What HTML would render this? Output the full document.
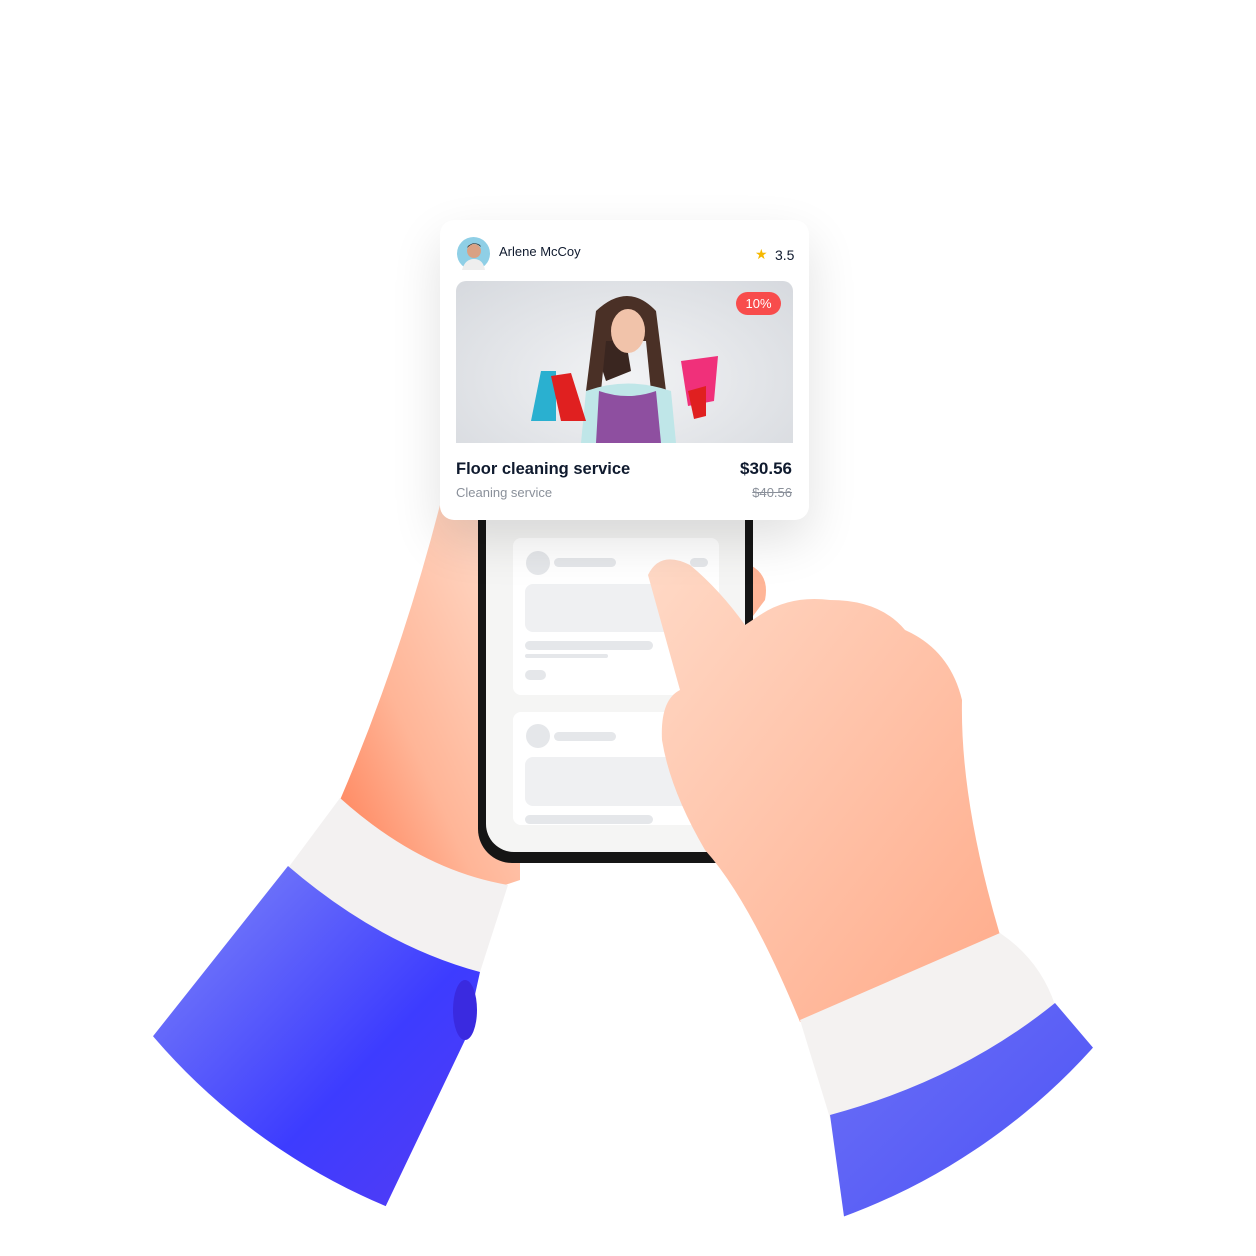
<!DOCTYPE html>
<html><head><style>
html,body{margin:0;padding:0;background:#fff;width:1256px;height:1256px;overflow:hidden;font-family:"Liberation Sans",sans-serif}
.card{position:absolute;left:440px;top:220px;width:369px;height:300px;background:#fff;border-radius:14px;box-shadow:0 20px 50px rgba(0,0,0,.12)}
.t{position:absolute;white-space:nowrap;color:#0f1a2e}
</style></head><body>
<svg width="1256" height="1256" style="position:absolute;left:0;top:0">
<defs>
<clipPath id="c"><circle cx="628" cy="630" r="625"/></clipPath>
<linearGradient id="sk" x1="0" y1="0" x2="1" y2="1"><stop offset="0" stop-color="#ffd9c6"/><stop offset="1" stop-color="#ffab8a"/></linearGradient>
<linearGradient id="skl" x1="1" y1="0" x2="0" y2="1"><stop offset="0" stop-color="#ffe0d0"/><stop offset="0.6" stop-color="#ffb597"/><stop offset="1" stop-color="#ff7a50"/></linearGradient>
<linearGradient id="bl" x1="0" y1="0" x2="1" y2="1"><stop offset="0" stop-color="#8a93f5"/><stop offset=".6" stop-color="#3d3cff"/><stop offset="1" stop-color="#5a3cf0"/></linearGradient>
<linearGradient id="br" x1="0" y1="0" x2="1" y2="1"><stop offset="0" stop-color="#6b6ff7"/><stop offset="1" stop-color="#4a50f5"/></linearGradient>
</defs>
<g clip-path="url(#c)">
<!-- left arm -->
<path d="M440 505 L520 505 L520 880 L505 885 L470 900 L340 800 Q400 660 440 505 Z" fill="url(#skl)"/>
<path d="M750 565 Q770 575 765 600 L750 620 Z" fill="#ffb597"/>
<path d="M340 798 Q420 870 508 885 L480 972 Q380 945 288 868 Z" fill="#f3f1f1"/>
<path d="M288 866 Q380 945 480 972 L465 1040 L360 1260 L100 1260 L150 1040 Z" fill="url(#bl)"/>
<ellipse cx="465" cy="1010" rx="12" ry="30" fill="#3a2ae0"/>
<!-- phone -->
<rect x="478" y="480" width="275" height="383" rx="34" fill="#151515"/>
<rect x="486" y="480" width="259" height="372" rx="28" fill="#f5f5f4"/>
<rect x="513" y="538" width="206" height="157" rx="8" fill="#fff"/>
<circle cx="538" cy="563" r="12" fill="#e5e7ea"/>
<rect x="554" y="558" width="62" height="9" rx="4.5" fill="#e5e7ea"/>
<rect x="690" y="558" width="18" height="9" rx="4.5" fill="#e5e7ea"/>
<rect x="525" y="584" width="180" height="48" rx="8" fill="#eff0f2"/>
<rect x="525" y="641" width="128" height="9" rx="4.5" fill="#e5e7ea"/>
<rect x="525" y="654" width="83" height="4" rx="2" fill="#e5e7ea"/>
<rect x="525" y="670" width="21" height="10" rx="5" fill="#e5e7ea"/>
<rect x="513" y="712" width="206" height="113" rx="8" fill="#fff"/>
<circle cx="538" cy="736" r="12" fill="#e5e7ea"/>
<rect x="554" y="732" width="62" height="9" rx="4.5" fill="#e5e7ea"/>
<rect x="525" y="757" width="180" height="49" rx="8" fill="#eff0f2"/>
<rect x="525" y="815" width="128" height="9" rx="4.5" fill="#e5e7ea"/>
<!-- right hand -->
<path d="M648 575 Q660 550 690 565 Q720 590 745 625 L760 615 Q790 595 830 600 Q880 600 905 630 Q950 650 962 700 Q960 800 1000 935 L800 1022 Q750 900 705 850 Q670 790 662 740 Q660 700 680 690 Z" fill="url(#sk)"/>
<path d="M800 1020 L1000 933 Q1040 960 1055 1005 Q960 1080 830 1118 Z" fill="#f4f2f1"/>
<path d="M830 1115 Q960 1080 1055 1003 L1095 1050 L1100 1260 L850 1260 Z" fill="url(#br)"/>
</g>
</svg>
<div class="card">
  <svg style="position:absolute;left:17px;top:17px" width="33" height="33"><circle cx="16.5" cy="16.5" r="16.5" fill="#8fcfe6"/><circle cx="17" cy="14" r="7" fill="#d9a184"/><path d="M10 11 Q17 3 24 10 L23 8 Q17 4 11 9Z" fill="#2a1e18"/><path d="M5 33 Q8 22 17 22 Q26 22 28 33Z" fill="#eee"/></svg>
  <div class="t" style="left:59px;top:24px;font-size:13px">Arlene McCoy</div>
  <div class="t" style="left:315px;top:26px;font-size:14px;color:#f6b800">★</div>
  <div class="t" style="left:335px;top:27px;font-size:14px">3.5</div>
  <div style="position:absolute;left:16px;top:61px;width:337px;height:162px;border-radius:10px 10px 0 0;background:radial-gradient(ellipse at 50% 60%,#f2f3f5,#d6d9de);overflow:hidden">
    <svg width="337" height="162">
      <path d="M140 70 Q150 50 170 60 L175 90 L150 100Z" fill="#3a2620"/>
      <path d="M140 30 Q172 0 200 30 L210 110 L195 110 L190 60 L150 60 L145 110 L130 110 Z" fill="#4a3026"/>
      <ellipse cx="172" cy="50" rx="17" ry="22" fill="#f1c3aa"/>
      <path d="M125 162 L130 110 Q172 95 215 110 L220 162Z" fill="#bfe6e8"/>
      <path d="M140 162 L143 110 Q172 120 200 110 L205 162Z" fill="#8e4fa0"/>
      <path d="M75 140 L85 90 L100 90 L100 140Z" fill="#2ab0d0"/>
      <path d="M95 95 L115 92 L130 140 L105 140Z" fill="#e02020"/>
      <path d="M225 80 L262 75 L258 120 L232 125Z" fill="#f0307a"/>
      <path d="M232 110 L250 105 L250 135 L238 138Z" fill="#e02020"/>
    </svg>
    <div style="position:absolute;right:12px;top:11px;width:45px;height:23px;border-radius:12px;background:#f84c4c;color:#fff;font-size:13px;text-align:center;line-height:23px">10%</div>
  </div>
  <div class="t" style="left:16px;top:240px;font-size:16.5px;font-weight:bold">Floor cleaning service</div>
  <div class="t" style="right:17px;top:239px;font-size:17px;font-weight:bold">$30.56</div>
  <div class="t" style="left:16px;top:265px;font-size:13px;color:#8a909a">Cleaning service</div>
  <div class="t" style="right:17px;top:265px;font-size:13px;color:#8a909a;text-decoration:line-through">$40.56</div>
</div>
</body></html>
